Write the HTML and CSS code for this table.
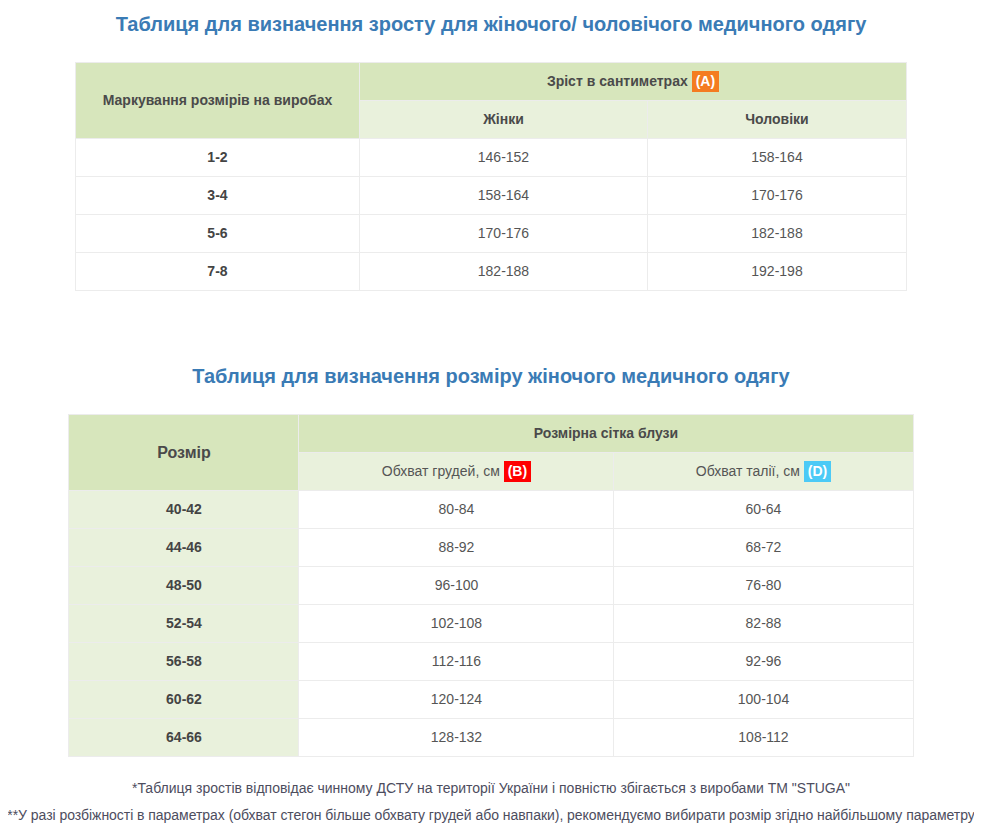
FILE: index.html
```html
<!DOCTYPE html>
<html lang="uk">
<head>
<meta charset="utf-8">
<title>Таблиця розмірів</title>
<link rel="stylesheet" href="styles.css">
</head>
<body>
<div class="page">
  <h2 class="title title-first">Таблиця для визначення зросту для жіночого/ чоловічого медичного одягу</h2>
  <table class="size-table table-height">
    <colgroup>
      <col class="c1a"><col class="c2a"><col class="c3a">
    </colgroup>
    <thead>
      <tr>
        <th rowspan="2" class="head-dark">Маркування розмірів на виробах</th>
        <th colspan="2" class="head-dark">Зріст в сантиметрах <span class="badge badge-a">(A)</span></th>
      </tr>
      <tr>
        <th class="head-light">Жінки</th>
        <th class="head-light">Чоловіки</th>
      </tr>
    </thead>
    <tbody>
      <tr><td class="strong">1-2</td><td>146-152</td><td>158-164</td></tr>
      <tr><td class="strong">3-4</td><td>158-164</td><td>170-176</td></tr>
      <tr><td class="strong">5-6</td><td>170-176</td><td>182-188</td></tr>
      <tr><td class="strong">7-8</td><td>182-188</td><td>192-198</td></tr>
    </tbody>
  </table>

  <h2 class="title title-second">Таблиця для визначення розміру жіночого медичного одягу</h2>
  <table class="size-table table-size">
    <colgroup>
      <col class="c1b"><col class="c2b"><col class="c3b">
    </colgroup>
    <thead>
      <tr>
        <th rowspan="2" class="head-dark big">Розмір</th>
        <th colspan="2" class="head-dark">Розмірна сітка блузи</th>
      </tr>
      <tr>
        <th class="head-light normal">Обхват грудей, см <span class="badge badge-b">(B)</span></th>
        <th class="head-light normal">Обхват талії, см <span class="badge badge-d">(D)</span></th>
      </tr>
    </thead>
    <tbody>
      <tr><td class="strong tinted">40-42</td><td>80-84</td><td>60-64</td></tr>
      <tr><td class="strong tinted">44-46</td><td>88-92</td><td>68-72</td></tr>
      <tr><td class="strong tinted">48-50</td><td>96-100</td><td>76-80</td></tr>
      <tr><td class="strong tinted">52-54</td><td>102-108</td><td>82-88</td></tr>
      <tr><td class="strong tinted">56-58</td><td>112-116</td><td>92-96</td></tr>
      <tr><td class="strong tinted">60-62</td><td>120-124</td><td>100-104</td></tr>
      <tr><td class="strong tinted">64-66</td><td>128-132</td><td>108-112</td></tr>
    </tbody>
  </table>

  <p class="note note-first">*Таблиця зростів відповідає чинному ДСТУ на території України і повністю збігається з виробами ТМ "STUGA"</p>
  <p class="note note-second">**У разі розбіжності в параметрах (обхват стегон більше обхвату грудей або навпаки), рекомендуємо вибирати розмір згідно найбільшому параметру</p>
</div>
</body>
</html>
```

FILE: styles.css
```css
html, body {
  margin: 0;
  padding: 0;
  background: #fff;
}

body {
  margin: 0 8px;
  font-family: "Liberation Sans", Arial, sans-serif;
  font-size: 14px;
  line-height: 20px;
  color: #555;
}

.page {
  display: flex;
  flex-direction: column;
  align-items: center;
}

.title {
  margin: 0;
  font-size: 20px;
  line-height: 26px;
  font-weight: bold;
  color: #3a7bb5;
  text-align: center;
}

.title-first {
  margin-top: 11px;
  margin-bottom: 25px;
}

.title-second {
  margin-top: 72px;
  margin-bottom: 25px;
}

.size-table {
  border-collapse: collapse;
  table-layout: fixed;
}

.table-height { width: 831px; }
.table-size { width: 844px; }

.c1a { width: 284px; }
.c2a { width: 288px; }
.c3a { width: 259px; }

.c1b { width: 230px; }
.c2b { width: 315px; }
.c3b { width: 299px; }

.size-table th,
.size-table td {
  border: 1px solid #ececec;
  padding: 8px;
  line-height: 21px;
  text-align: center;
  vertical-align: middle;
  font-size: 14px;
}

.size-table th {
  font-weight: bold;
  color: #4a4a4a;
}

.head-dark {
  background: #d7e6bc;
}

.head-light {
  background: #e9f1dc;
}

.size-table th.big {
  font-size: 16px;
}

.size-table th.normal {
  font-weight: normal;
  color: #555;
}

.size-table td {
  color: #555;
  background: #fff;
}

.size-table td.strong {
  font-weight: bold;
  color: #444;
}

.size-table td.tinted {
  background: #e9f1dc;
}

.badge {
  display: inline-block;
  padding: 0 4px;
  line-height: 21px;
  font-weight: bold;
  color: #fff;
}

.badge-a { background: #f47c20; }
.badge-b { background: #ff0000; }
.badge-d { background: #4ccaf6; }

.note {
  margin: 0;
  text-align: center;
  color: #4d4d5e;
  white-space: nowrap;
  line-height: 27px;
}

.note-first {
  margin-top: 18px;
}

.note-second {
  letter-spacing: -0.04px;
}
```
